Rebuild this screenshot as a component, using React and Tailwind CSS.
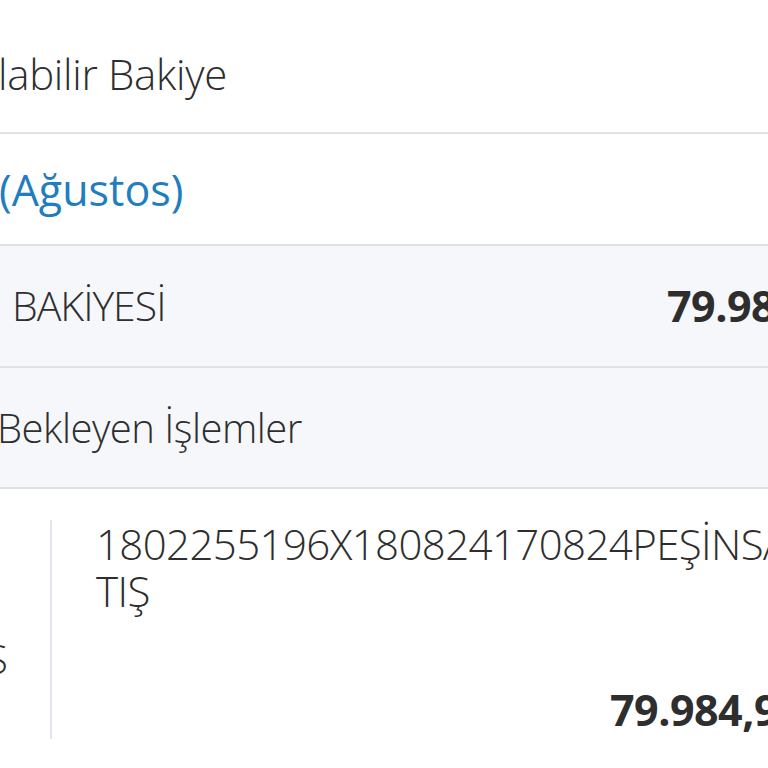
import React from 'react';

const ui = { fontFamily: '"Open Sans", "Noto Sans", sans-serif' };

export default function App() {
  return (
    <div className="w-[768px] h-[768px] overflow-hidden bg-white text-[#2e2e2e]" style={ui}>
      <div className="h-[134px] flex items-center border-b-2 border-[#dfe1e9] pt-[14px]">
        <span className="text-[42px] font-light tracking-[-0.3px] -ml-[2px]">labilir Bakiye</span>
      </div>

      <div className="h-[112px] flex items-center border-b-2 border-[#dfe1e9] pt-[2px]">
        <span className="text-[43px] text-[#1f7dc0] tracking-[0px] -ml-[1px]">(Ağustos)</span>
      </div>

      <div className="h-[122px] flex items-center bg-[#f6f7fa] border-b-2 border-[#dfe1e9]">
        <span className="w-[667px] shrink-0 pl-[12px] text-[41px] font-light tracking-[-1px]">BAKİYESİ</span>
        <span className="shrink-0 text-[43px] font-bold tracking-[-0.5px] whitespace-nowrap">79.984,96 TL</span>
      </div>

      <div className="h-[121px] flex items-center bg-[#f6f7fa] border-b-2 border-[#dfe1e9]">
        <span className="text-[40px] font-light tracking-[-0.5px] -ml-[3px]">Bekleyen İşlemler</span>
      </div>

      <div className="flex pt-[31px]">
        <div className="w-[52px] shrink-0 flex items-end pb-[50px] border-r-2 border-[#e3e5ec] h-[219px]">
          <span className="text-[40px] font-light -ml-[14px]">S</span>
        </div>
        <div className="flex-1 pl-[44px] overflow-hidden">
          <div className="text-[42px] font-light leading-[47px] tracking-[-0.6px] whitespace-nowrap">
            <span className="block">1802255196X180824170824PEŞİNSA</span>
            <span className="block">TIŞ</span>
          </div>
          <div className="mt-[64px] pl-[514px] whitespace-nowrap text-[43px] font-bold tracking-[-0.5px]">
            79.984,96 TL
          </div>
        </div>
      </div>
    </div>
  );
}
